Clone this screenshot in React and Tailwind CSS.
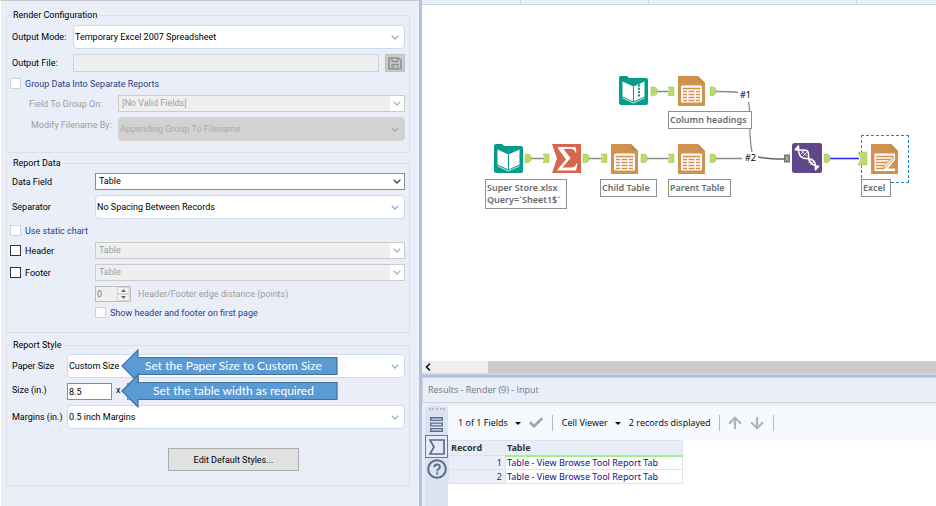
import React from "react";
import clsx from "clsx";
import { LuArrowUp, LuArrowDown, LuCheck, LuChevronLeft } from "react-icons/lu";

function Chevron({ className }) {
  return (
    <svg viewBox="0 0 8 5" className={clsx("pointer-events-none absolute h-[5px] w-2", className)}>
      <path d="M0.7 0.7 L4 4 L7.3 0.7" fill="none" stroke="currentColor" strokeWidth="1.3" />
    </svg>
  );
}

function RoundSelect({ id, value, disabled }) {
  return (
    <div className="relative min-w-0 flex-1">
      <select
        id={id}
        disabled={disabled}
        className={clsx(
          "block h-6 w-full appearance-none rounded-[4px] border pl-px pr-5 opacity-100 outline-none",
          disabled ? "border-[#d2d2d2] bg-[#d2d2d2] text-[#aaaaaa]" : "border-[#cddaf0] bg-white text-black"
        )}
      >
        <option>{value}</option>
      </select>
      <Chevron className={clsx("right-[6px] top-[10px]", disabled ? "text-[#a8a8a8]" : "text-[#9db0cc]")} />
    </div>
  );
}

function SquareSelect({ id, value, disabled }) {
  return (
    <div className="relative min-w-0 flex-1">
      <select
        id={id}
        disabled={disabled}
        className={clsx(
          "block h-[17px] w-full appearance-none rounded-none border pl-[3px] pr-5 leading-[15px] opacity-100 outline-none",
          disabled ? "border-[#cccccc] bg-[#efefef] text-[#9d9d9d]" : "border-[#8c8c8c] bg-white text-black"
        )}
      >
        <option>{value}</option>
      </select>
      {disabled && <span className="pointer-events-none absolute inset-y-px right-px w-[14px] bg-white" />}
      <Chevron className={clsx("right-[4px] top-[6px]", disabled ? "text-[#b4b4b4]" : "text-[#444444]")} />
    </div>
  );
}

function CheckBox({ id, label, strong, className }) {
  return (
    <div className={clsx("flex items-center gap-1", className)}>
      <input
        id={id}
        type="checkbox"
        className={clsx(
          "size-[11px] shrink-0 appearance-none border bg-white",
          strong ? "border-[#333333]" : "border-[#cfd3da]"
        )}
      />
      <label htmlFor={id} className={strong ? "text-black" : "text-[#27418a]"}>
        {label}
      </label>
    </div>
  );
}

function Group({ title, children, className }) {
  return (
    <fieldset className={clsx("min-w-0 border border-[#dcdfe6] pl-[5px] pr-1", className)}>
      <legend className="-ml-px px-[2px] text-[9px] leading-3">{title}</legend>
      {children}
    </fieldset>
  );
}

function Callout({ children, className }) {
  return (
    <div className={clsx("absolute h-[34px] w-[217px]", className)}>
      <svg viewBox="0 0 217 34" className="absolute inset-0 h-full w-full">
        <path
          d="M1 17 L17 1 V8.5 H216 V25.5 H17 V33 Z"
          fill="#5b9bd5"
          stroke="#41719c"
          strokeWidth="1.2"
        />
      </svg>
      <p className="relative pl-2 text-center font-[Lato,sans-serif] text-[12px] leading-[34px] text-white">
        {children}
      </p>
    </div>
  );
}

function ConfigPanel() {
  return (
    <form className="w-[422px] shrink-0 border-l border-r-3 border-t border-l-white border-r-[#b0c0e2] border-t-[#c6c8cc] bg-[#e9eef9] pl-[5px] pr-[9px] pt-2 font-[Roboto,sans-serif] text-[9px] leading-3 text-black">
      <Group title="Render Configuration" className="h-36">
        <div className="flex flex-col gap-[5px] pt-1">
          <div className="flex items-center">
            <label htmlFor="mode" className="w-[61px] shrink-0">Output Mode:</label>
            <RoundSelect id="mode" value="Temporary Excel 2007 Spreadsheet" />
          </div>
          <div className="flex items-center">
            <label htmlFor="file" className="w-[61px] shrink-0">Output File:</label>
            <input id="file" disabled className="h-[18px] min-w-0 flex-1 border border-[#cfd3da] bg-[#efefef]" />
            <button type="button" aria-label="Save" className="ml-[6px] grid h-[18px] w-5 place-items-center border border-[#c0c0c0] bg-[#cbcbcb]">
              <svg viewBox="0 0 14 13" className="h-[13px] w-[14px]" fill="none" stroke="#929292" strokeWidth="1.6">
                <path d="M1 1 H10.5 L13 3.5 V12 H1 Z" />
                <path d="M4 1.5 V4.5 H9.5 V1.5 M4 12 V7.5 H10 V12 M6 9 V12" strokeWidth="1.3" />
              </svg>
            </button>
          </div>
          <CheckBox id="group" label="Group Data Into Separate Reports" className="-ml-[2px] h-[13px]" />
          <div className="flex items-center text-[#9d9d9d]">
            <label htmlFor="field" className="w-[106px] shrink-0 pl-[17px]">Field To Group On:</label>
            <SquareSelect id="field" value="[No Valid Fields]" disabled />
          </div>
          <div className="flex items-center text-[#9d9d9d]">
            <label htmlFor="modify" className="w-[106px] shrink-0 pb-2 pl-[19px]">Modify Filename By:</label>
            <RoundSelect id="modify" value="Appending Group To Filename" disabled />
          </div>
        </div>
      </Group>

      <Group title="Report Data" className="mt-1 h-44">
        <div className="flex flex-col gap-[5px] pt-1">
          <div className="flex items-center">
            <label htmlFor="data" className="w-[83px] shrink-0">Data Field</label>
            <SquareSelect id="data" value="Table" />
          </div>
          <div className="flex items-center">
            <label htmlFor="sep" className="w-[83px] shrink-0">Separator</label>
            <RoundSelect id="sep" value="No Spacing Between Records" />
          </div>
          <CheckBox id="static" label="Use static chart" className="-ml-[2px] h-[13px]" />
          <div className="flex items-center">
            <CheckBox id="header" label="Header" strong className="-ml-[2px] w-[85px]" />
            <SquareSelect id="headerTable" value="Table" disabled />
          </div>
          <div className="flex items-center">
            <CheckBox id="footer" label="Footer" strong className="-ml-[2px] w-[85px]" />
            <SquareSelect id="footerTable" value="Table" disabled />
          </div>
          <div className="flex items-center pl-[83px]">
            <div className="flex h-4 w-9 border border-[#bdbdbd] bg-[#efefef]">
              <input id="edge" defaultValue="0" disabled className="w-[21px] pl-px text-[#777777]" />
              <svg viewBox="0 0 13 14" className="h-[14px] w-[13px]">
                <path d="M0.5 0.5 H12 V6.5 H0.5 Z M0.5 7.5 H12 V13.5 H0.5 Z" fill="#f4f4f4" stroke="#d6d6d6" />
                <path d="M4 5 L6.5 2 L9 5 Z M4 9 L6.5 12 L9 9 Z" fill="#666666" />
              </svg>
            </div>
            <label htmlFor="edge" className="pl-[7px] text-[#9d9d9d]">Header/Footer edge distance (points)</label>
          </div>
          <CheckBox id="first" label="Show header and footer on first page" className="h-[11px] pl-[83px]" />
        </div>
      </Group>

      <Group title="Report Style" className="mt-[6px] h-[147px]">
        <div className="flex flex-col gap-[5px] pt-[3px]">
          <div className="relative flex items-center">
            <label htmlFor="paper" className="w-[55px] shrink-0">Paper Size</label>
            <RoundSelect id="paper" value="Custom Size" />
            <Callout className="left-[109px] top-[-5px] z-10">Set the Paper Size to Custom Size</Callout>
          </div>
          <div className="relative flex items-center">
            <label htmlFor="width" className="w-[55px] shrink-0 pb-1">Size (in.)</label>
            <input id="width" defaultValue="8.5" className="h-[17px] w-[45px] border border-[#8c8c8c] bg-white pl-px" />
            <span className="w-[15px] pb-1 pl-1">x</span>
            <input aria-label="Height" className="h-[17px] w-[45px] border border-[#8c8c8c] bg-white" />
            <Callout className="left-[109px] top-[-9px] z-20">Set the table width as required</Callout>
          </div>
          <div className="flex items-center">
            <label htmlFor="margins" className="w-[55px] shrink-0">Margins (in.)</label>
            <RoundSelect id="margins" value="0.5 inch Margins" />
          </div>
        </div>
        <button type="button" className="ml-[156px] mt-[19px] h-[23px] w-[131px] border border-[#adadad] bg-[#e1e1e1]">
          Edit Default Styles...
        </button>
      </Group>
    </form>
  );
}

function BookIcon({ dotted, className }) {
  return (
    <svg viewBox="0 0 29 29" className={clsx("absolute size-[29px]", className)}>
      <path d="M0 2 Q0 0 2 0 H8 L10 2 H27 Q29 2 29 4 V27 Q29 29 27 29 H2 Q0 29 0 27 Z" fill="#069c8b" />
      <path d="M3.5 5.5 L14.5 10.5 L25.5 5.5 V20.5 L14.5 25.5 L3.5 20.5 Z" fill="#ffffff" />
      <path d="M14.5 10.5 V25.5" stroke="#069c8b" strokeWidth="1" />
      <path d="M3.5 22 L14.5 27 L25.5 22" fill="none" stroke="#ffffff" strokeWidth="0.8" />
      {dotted && (
        <g fill="#069c8b">
          <circle cx="20" cy="9.5" r="1.2" />
          <circle cx="20" cy="12.8" r="1.2" />
          <circle cx="20" cy="16.1" r="1.2" />
          <circle cx="20" cy="19.4" r="1.2" />
        </g>
      )}
    </svg>
  );
}

function TableIcon({ className }) {
  return (
    <svg viewBox="0 0 27 30" className={clsx("absolute h-[30px] w-[27px]", className)}>
      <path d="M0 0 H20 L27 7 V30 H0 Z" fill="#d1924f" />
      <path d="M20 0 L27 7 H20 Z" fill="#c98a45" />
      <rect x="3" y="9.5" width="21" height="17" rx="1.5" fill="#ffffff" />
      <path d="M4.5 12.5 H22.5" stroke="#d1924f" strokeWidth="1.6" />
      <path
        d="M5 15.5 H9 M10.5 15.5 H16.5 M18 15.5 H22 M5 18.500 H9 M10.5 18.500 H16.5 M18 18.500 H22 M5 21.500 H9 M10.5 21.500 H16.5 M18 21.500 H22 M5 24.500 H9 M10.5 24.500 H16.5 M18 24.500 H22"
        stroke="#d1924f"
        strokeWidth="1.3"
      />
    </svg>
  );
}

function SummarizeIcon({ className }) {
  return (
    <svg viewBox="0 0 29 29" className={clsx("absolute size-[29px]", className)}>
      <path d="M0 0 H29 V29 H0 L5 14.5 Z" fill="#d7664d" />
      <path
        d="M6 3 H23.5 L24.5 8.5 H23.3 Q22.5 5 19 5 H11.5 L18.5 14 L10.5 23.5 H19.5 Q23 23.5 24.5 19.5 H25.6 L24 26.5 H5.500 V25.5 L14 15.5 L6 4.5 Z"
        fill="#ffffff"
      />
    </svg>
  );
}

function UnionIcon({ className }) {
  return (
    <svg viewBox="0 0 30 30" className={clsx("absolute size-[30px]", className)}>
      <rect width="30" height="30" rx="2.5" fill="#614788" />
      <g fill="none" stroke="#ffffff" strokeWidth="1.5">
        <path d="M3 6.500 C9 8.500 17 4 16.5 12 C16 20 20 22 27 23.500" />
        <path d="M6.500 3 C6 9 7 15.500 14 15.500 C22 15.500 24 19 23.500 27" />
      </g>
      <path d="M2 6.800 L6.800 1.500 L7.300 6 Z M22.800 24 L28 22.800 L23.300 28 Z" fill="#ffffff" />
      <path
        d="M8.500 11.500 L12.500 7.500 M10.500 13.500 L15 9 M9.500 8 L14.500 13 M16.500 20 L20.500 16 M18.500 22 L22.500 18 M16.500 16.500 L21.500 21.500"
        stroke="#ffffff"
        strokeWidth="0.9"
      />
    </svg>
  );
}

function RenderIcon({ className }) {
  return (
    <svg viewBox="0 0 27 30" className={clsx("absolute h-[30px] w-[27px]", className)}>
      <path d="M0 0 H20 L27 7 V30 H0 Z" fill="#d1924f" />
      <path d="M20 0 L27 7 H20 Z" fill="#c98a45" />
      <path d="M3.500 9.500 H24 V27 H3.500 Z" fill="#ffffff" />
      <path d="M5 12.500 H22.500 M5 15.500 H20 M5 18.500 H17 M5 21.500 H14 M5 24.500 H12" stroke="#d1924f" strokeWidth="1.400" />
      <path d="M23 14.500 L14.500 23.500 L12 25 L13 22 L21.500 13.500 Z" fill="#ffffff" stroke="#d1924f" strokeWidth="1" />
      <path d="M24 16 L17 24.500 H24 Z" fill="#d1924f" />
    </svg>
  );
}

function Caption({ children, className }) {
  return (
    <p className={clsx("absolute border border-[#8f8f8f] bg-white px-px py-[2px] text-[9px] font-semibold leading-3 text-[#6b6b6b]", className)}>
      {children}
    </p>
  );
}

const outAnchors = [[230, 86], [289, 86], [104, 153], [162, 153], [220, 153], [289, 153], [403, 153]];
const inAnchors = [[246, 86], [121, 153], [179, 153], [246, 153]];

function Wires() {
  return (
    <svg viewBox="0 0 514 356" className="absolute left-0 top-0 h-[356px] w-[514px]">
      <g fill="none" stroke="#8c8c8c" strokeWidth="1.3">
        <path d="M235 86.5 H247 M109 153.5 H122 M167 153.5 H180 M225 153.5 H247 M294 153.5 H320" />
        <path d="M294 86.5 C304 86.5 310 86.5 316 87.5 M326.5 97 C329 104 326 130 330 147" />
        <path d="M336 152 C344 154 350 154 363 154" stroke="#666666" />
        <path d="M408 153.5 H437" stroke="#2a2af0" strokeWidth="1.6" />
      </g>
      <g fill="#b8dc6c" stroke="#9cc44c" strokeWidth="0.5">
        {outAnchors.map(([x, y]) => (
          <path key={`${x}-${y}`} d={`M${x - 1} ${y - 4} H${x + 3} L${x + 5} ${y - 2} V${y + 2.5} L${x + 3} ${y + 4.5} H${x - 1} Z`} />
        ))}
        {inAnchors.map(([x, y]) => (
          <path key={`${x}-${y}`} d={`M${x} ${y - 4} H${x + 6} V${y + 4.5} H${x} L${x + 2} ${y} Z`} />
        ))}
        <path d="M436 147 H445 V160 H436 L439 153.5 Z" />
      </g>
      <path d="M362 149.5 H368 V157.5 H362 Z" fill="#777777" />
      <path d="M363.5 151 L366.500 156 M366.500 151 L363.5 156" stroke="#d8d8d8" strokeWidth="0.7" />
    </svg>
  );
}

function Canvas() {
  return (
    <div className="relative min-h-[356px] flex-1 overflow-hidden bg-white font-['Noto_Sans',sans-serif]">
      <div className="absolute left-[439px] top-[130px] h-12 w-12 border border-dashed border-[#1e86d8]" />
      <Wires />
      <BookIcon dotted className="left-[197px] top-[71px]" />
      <TableIcon className="left-[256px] top-[71px]" />
      <BookIcon className="left-[72px] top-[139px]" />
      <SummarizeIcon className="left-[130px] top-[139px]" />
      <TableIcon className="left-[189px] top-[139px]" />
      <TableIcon className="left-[256px] top-[139px]" />
      <UnionIcon className="left-[370px] top-[138px]" />
      <RenderIcon className="left-[449px] top-[139px]" />
      <Caption className="left-[246px] top-[106px] w-[84px]">Column headings</Caption>
      <Caption className="left-[63px] top-[174px] w-[82px]">
        Super Store.xlsx
        <br />
        Query=`Sheet1$`
      </Caption>
      <Caption className="left-[178px] top-[174px] w-[57px]">Child Table</Caption>
      <Caption className="left-[246px] top-[174px] w-[63px]">Parent Table</Caption>
      <Caption className="left-[439px] top-[174px] w-[30px]">Excel</Caption>
      <span className="absolute left-[318px] top-[84px] text-[9px] leading-3 text-black">#1</span>
      <span className="absolute left-[323px] top-[147px] text-[9px] leading-3 text-black">#2</span>
    </div>
  );
}

function SideTools() {
  return (
    <nav className="flex w-[23px] shrink-0 flex-col items-center rounded-t bg-[#dce3f0] pt-[2px] text-[#5a6b8c]">
      <div className="h-[2px] w-4 border-t-2 border-dotted border-[#b4bac6]" />
      <button type="button" aria-label="Messages" className="mt-[6px] grid h-[17px] place-items-center">
        <svg viewBox="0 0 13 15" className="h-[15px] w-[13px]" fill="none" stroke="currentColor" strokeWidth="1.4">
          <path d="M0.7 0.7 H12.3 V3.4 H0.7 Z M0.7 6.1 H12.3 V8.9 H0.7 Z M0.7 11.6 H12.3 V14.3 H0.7 Z" />
        </svg>
      </button>
      <button type="button" aria-label="Input anchor" className="mt-[2px] grid h-[23px] w-[23px] place-items-center border border-[#2d8ae0] bg-[#e4ebf8]">
        <svg viewBox="0 0 16 16" className="size-4" fill="none" stroke="currentColor" strokeWidth="1.7">
          <path d="M1 1 H15 V15 H1 L5 8 Z" />
        </svg>
      </button>
      <button type="button" aria-label="Help" className="mt-px grid size-5 place-items-center">
        <svg viewBox="0 0 20 20" className="size-5" fill="none" stroke="currentColor" strokeWidth="2">
          <circle cx="10" cy="10" r="8.8" />
          <path d="M7.3 8.3 C7.3 4.5 12.9 4.5 12.9 7.9 C12.9 10 10.2 10 10.2 12.2 M10.2 13.6 V15.5" />
        </svg>
      </button>
    </nav>
  );
}

function Caret() {
  return <span className="border-x-[3px] border-t-[3px] border-x-transparent border-t-black" />;
}

function Results() {
  return (
    <section className="flex h-[129px] flex-col bg-[#e9eef9] font-['Open_Sans',sans-serif] text-[9px]">
      <h2 className="h-[26px] shrink-0 border-y border-l border-[#cfd1d6] pl-[5px] leading-6 text-[#737780]">
        Results - Render (9) - Input
      </h2>
      <div className="flex min-h-0 flex-1 pl-[3px] pt-[3px]">
        <SideTools />
        <div className="min-w-0 flex-1 bg-white">
          <div className="flex h-[34px] items-center bg-[#f6faff] text-black">
            <button type="button" className="flex items-center gap-[7px] pl-[10px]">
              1 of 1 Fields <Caret />
            </button>
            <LuCheck className="ml-[7px] size-4 text-[#a3a3a3]" strokeWidth={4} />
            <span className="ml-2 h-4 w-px bg-[#b9b9b9]" />
            <button type="button" className="flex items-center gap-[7px] pl-[9px]">
              Cell Viewer <Caret />
            </button>
            <span className="pl-2">2 records displayed</span>
            <span className="ml-[9px] h-4 w-px bg-[#b9b9b9]" />
            <LuArrowUp className="ml-[6px] size-[18px] text-[#b3b3b3]" strokeWidth={3} />
            <LuArrowDown className="ml-1 size-[18px] text-[#b3b3b3]" strokeWidth={3} />
            <span className="ml-[7px] h-4 w-px bg-[#b9b9b9]" />
          </div>
          <table className="w-[235px] table-fixed border-collapse text-left font-['Noto_Sans',sans-serif] leading-3">
            <thead>
              <tr className="h-[15px] bg-[#e9eef9] font-bold text-[#333333]">
                <th className="w-[57px] border border-[#dce3f0] p-0 pl-[2px]">Record</th>
                <th className="border border-b-2 border-[#dce3f0] border-b-[#9df285] p-0 pl-px">Table</th>
              </tr>
            </thead>
            <tbody>
              {[1, 2].map((n) => (
                <tr key={n} className="h-[14px]">
                  <td className="border border-[#dce3f0] bg-[#e9eef9] p-0 pr-[3px] text-right text-[#333333]">{n}</td>
                  <td className="border border-[#dce3f0] p-0 pl-px text-[#12128c]">
                    Table - View Browse Tool Report Tab
                  </td>
                </tr>
              ))}
            </tbody>
          </table>
        </div>
      </div>
    </section>
  );
}

export default function App() {
  return (
    <div className="flex min-h-screen bg-[#e9eef9]">
      <ConfigPanel />
      <main className="flex min-w-0 flex-1 flex-col">
        <div className="flex h-[5px] shrink-0 border-b border-[#c8d4ea]">
          <span className="w-[99px] border-r border-[#c8d4ea]" />
          <span className="w-32 border-r border-[#c8d4ea]" />
          <span className="w-[208px] border-r border-[#c8d4ea]" />
        </div>
        <Canvas />
        <div className="flex h-3 shrink-0 bg-[#cbcbcb]">
          <button type="button" aria-label="Scroll left" className="flex w-[66px] items-center bg-[#efefef]">
            <LuChevronLeft className="size-3 text-black" strokeWidth={3} />
          </button>
        </div>
        <div className="h-1 shrink-0 border-b-2 border-[#aebfe2] bg-[#ccd3e2]" />
        <Results />
      </main>
    </div>
  );
}
